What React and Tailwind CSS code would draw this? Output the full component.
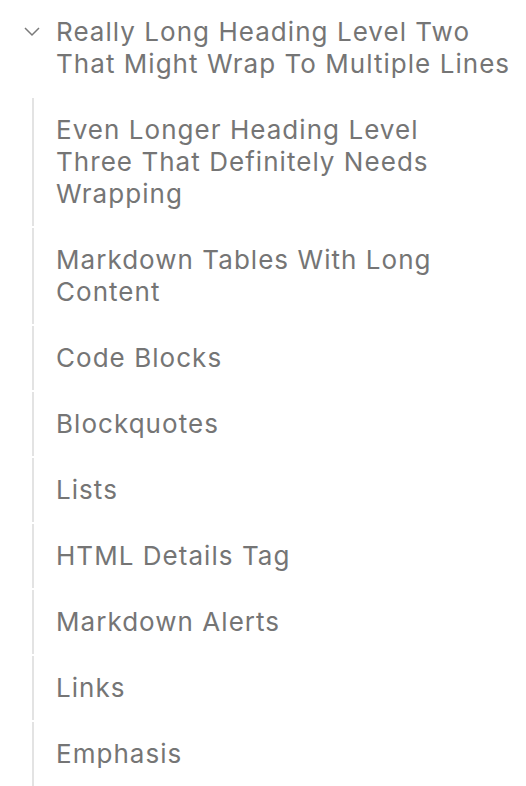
import React from "react";

const items = [
  "Even Longer Heading Level Three That Definitely Needs Wrapping",
  "Markdown Tables With Long Content",
  "Code Blocks",
  "Blockquotes",
  "Lists",
  "HTML Details Tag",
  "Markdown Alerts",
  "Links",
  "Emphasis",
];

export default function App() {
  return (
    <div
      className="w-[526px] h-[786px] overflow-hidden bg-white text-[#757575] text-[26px] leading-[32px] tracking-[0.04em]"
      style={{ fontFamily: "Inter, 'Noto Sans', sans-serif" }}
    >
      <div className="flex py-4">
        <div className="w-[56px] shrink-0 pl-[24px]">
          <svg
            width="16"
            height="32"
            viewBox="0 0 16 32"
            fill="none"
            stroke="#7a7a7a"
            strokeWidth="1.5"
          >
            <path d="M1 12 L8 19 L15 12" />
          </svg>
        </div>
        <div className="pr-2">
          Really Long Heading Level Two That Might Wrap To Multiple Lines
        </div>
      </div>
      <ul className="pl-[32px]">
        {items.map((t) => (
          <li
            key={t}
            className="mt-[2px] border-l-2 border-[#e3e3e3] pl-[22px] pr-[40px] py-4"
          >
            {t}
          </li>
        ))}
      </ul>
    </div>
  );
}
